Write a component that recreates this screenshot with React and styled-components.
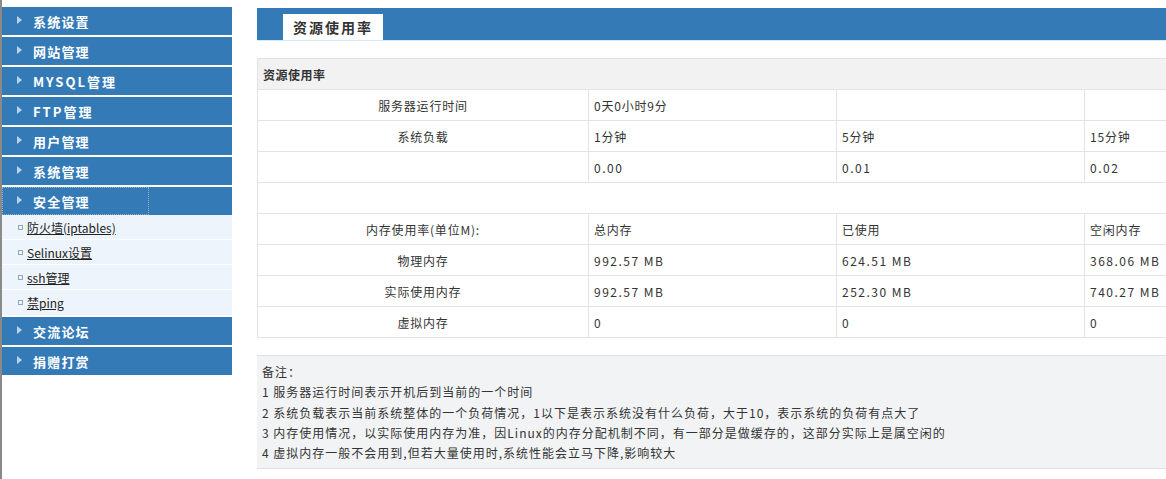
import React from "react";
import styled, { createGlobalStyle } from "styled-components";

const GlobalStyle = createGlobalStyle`
    html, body {
        margin: 0;
        padding: 0;
        background: #fff;
        overflow: hidden;
    }
    body {
        font-family: "Noto Sans CJK SC", "Noto Sans", sans-serif;
        font-size: 12px;
        color: #333;
    }
`;

const Page = styled.div`
    display: flex;
    width: 1400px;
    min-height: 479px;
`;

const Sidebar = styled.div`
    width: 230px;
    flex-shrink: 0;
    border-left: 2px solid #8a8a8a;
    padding-top: 7px;
`;

const MenuHead = styled.div`
    height: 28px;
    margin-bottom: ${(p) => (p.$open ? "0" : "2px")};
    background: #337ab7;
    display: flex;
    align-items: center;
`;

const MenuLink = styled.a`
    display: flex;
    align-items: center;
    height: 100%;
    width: ${(p) => (p.$focused ? "147px" : "auto")};
    outline: ${(p) => (p.$focused ? "1px dotted #9ab0c4" : "none")};
    outline-offset: -1px;
    padding-left: 15px;
    color: #fff;
    font-weight: bold;
    font-size: 13px;
    letter-spacing: ${(p) => (p.$wide ? "2px" : "1.2px")};
    text-decoration: none;
    box-sizing: border-box;
`;

const Arrow = styled.span`
    width: 0;
    height: 0;
    border-top: 4px solid transparent;
    border-bottom: 4px solid transparent;
    border-left: 5px solid #b9d3ee;
    margin-right: 11px;
    margin-bottom: 2px;
`;

const SubMenu = styled.div`
    background: #eef4fb;
    margin-bottom: 2px;
`;

const SubItem = styled.div`
    height: 24px;
    display: flex;
    align-items: center;
    padding-left: 16px;
    border-bottom: 1px solid #fbfdff;
    &:last-child {
        border-bottom: none;
        height: 25px;
    }
`;

const Bullet = styled.span`
    width: 3px;
    height: 3px;
    border: 1px solid #8fa8c0;
    margin-right: 4px;
`;

const SubLink = styled.a`
    color: #222;
    font-size: 12px;
    text-decoration: underline;
`;

const Main = styled.div`
    flex: 1;
    margin-left: 25px;
    padding-top: 8px;
`;

const TabBar = styled.div`
    height: 32px;
    background: #337ab7;
    border-bottom: 1px solid #d6ebf7;
    display: flex;
    align-items: flex-end;
    padding-left: 26px;
`;

const Tab = styled.div`
    width: 100px;
    height: 26px;
    background: #fff;
    display: flex;
    align-items: center;
    justify-content: center;
    font-size: 14px;
    font-weight: bold;
    letter-spacing: 2px;
    color: #333;
`;

const Table = styled.table`
    margin-top: 17px;
    border-collapse: collapse;
    table-layout: fixed;
    width: 1075px;
    font-size: 12px;
    color: #333;
`;

const HeadCell = styled.th`
    height: 30px;
    background: #f2f2f3;
    border: 1px solid #e3e3e3;
    text-align: left;
    padding: 0 5px;
    font-weight: bold;
    letter-spacing: 0.5px;
`;

const Cell = styled.td`
    height: 30px;
    border: 1px solid #e3e3e3;
    padding: 0 5px;
    text-align: ${(p) => (p.$center ? "center" : "left")};
    letter-spacing: ${(p) => (p.$num ? "1.5px" : "0.8px")};
    white-space: nowrap;
    overflow: hidden;
`;

const Notes = styled.div`
    margin-top: 17px;
    background: #f2f3f5;
    border-top: 1px solid #e0e0e0;
    border-bottom: 1px solid #e0e0e0;
    padding: 6px 5px 5px;
    font-size: 12px;
    line-height: 20.3px;
    letter-spacing: 1px;
    color: #333;
`;

const menusTop = ["系统设置", "网站管理", "MYSQL管理", "FTP管理", "用户管理", "系统管理"];
const subItems = ["防火墙(iptables)", "Selinux设置", "ssh管理", "禁ping"];

const rows = [
    ["服务器运行时间", "0天0小时9分", "", ""],
    ["系统负载", "1分钟", "5分钟", "15分钟"],
    ["", "0.00", "0.01", "0.02"],
];

const memRows = [
    ["内存使用率(单位M):", "总内存", "已使用", "空闲内存"],
    ["物理内存", "992.57 MB", "624.51 MB", "368.06 MB"],
    ["实际使用内存", "992.57 MB", "252.30 MB", "740.27 MB"],
    ["虚拟内存", "0", "0", "0"],
];

function Menu({ label, open, focused }) {
    return (
        <MenuHead $open={open}>
            <MenuLink $focused={focused} $wide={/^[A-Z]/.test(label)}>
                <Arrow />
                {label}
            </MenuLink>
        </MenuHead>
    );
}

function DataRow({ cells }) {
    return (
        <tr>
            {cells.map((c, i) => (
                <Cell key={i} $center={i === 0} $num={/^[0-9.]+( MB)?$/.test(c)}>
                    {c}
                </Cell>
            ))}
        </tr>
    );
}

export default function App() {
    return (
        <Page>
            <GlobalStyle />
            <Sidebar>
                {menusTop.map((m) => (
                    <Menu key={m} label={m} />
                ))}
                <Menu label="安全管理" open focused />
                <SubMenu>
                    {subItems.map((s) => (
                        <SubItem key={s}>
                            <Bullet />
                            <SubLink>{s}</SubLink>
                        </SubItem>
                    ))}
                </SubMenu>
                <Menu label="交流论坛" />
                <Menu label="捐赠打赏" />
            </Sidebar>
            <Main>
                <TabBar>
                    <Tab>资源使用率</Tab>
                </TabBar>
                <Table>
                    <colgroup>
                        <col style={{ width: 331 }} />
                        <col style={{ width: 248 }} />
                        <col style={{ width: 248 }} />
                        <col style={{ width: 248 }} />
                    </colgroup>
                    <thead>
                        <tr>
                            <HeadCell colSpan={4}>资源使用率</HeadCell>
                        </tr>
                    </thead>
                    <tbody>
                        {rows.map((r, i) => (
                            <DataRow key={i} cells={r} />
                        ))}
                        <tr>
                            <Cell colSpan={4} />
                        </tr>
                        {memRows.map((r, i) => (
                            <DataRow key={"m" + i} cells={r} />
                        ))}
                    </tbody>
                </Table>
                <Notes>
                    <div>备注：</div>
                    <div>1 服务器运行时间表示开机后到当前的一个时间</div>
                    <div>2 系统负载表示当前系统整体的一个负荷情况，1以下是表示系统没有什么负荷，大于10，表示系统的负荷有点大了</div>
                    <div>3 内存使用情况，以实际使用内存为准，因Linux的内存分配机制不同，有一部分是做缓存的，这部分实际上是属空闲的</div>
                    <div>4 虚拟内存一般不会用到,但若大量使用时,系统性能会立马下降,影响较大</div>
                </Notes>
            </Main>
        </Page>
    );
}
